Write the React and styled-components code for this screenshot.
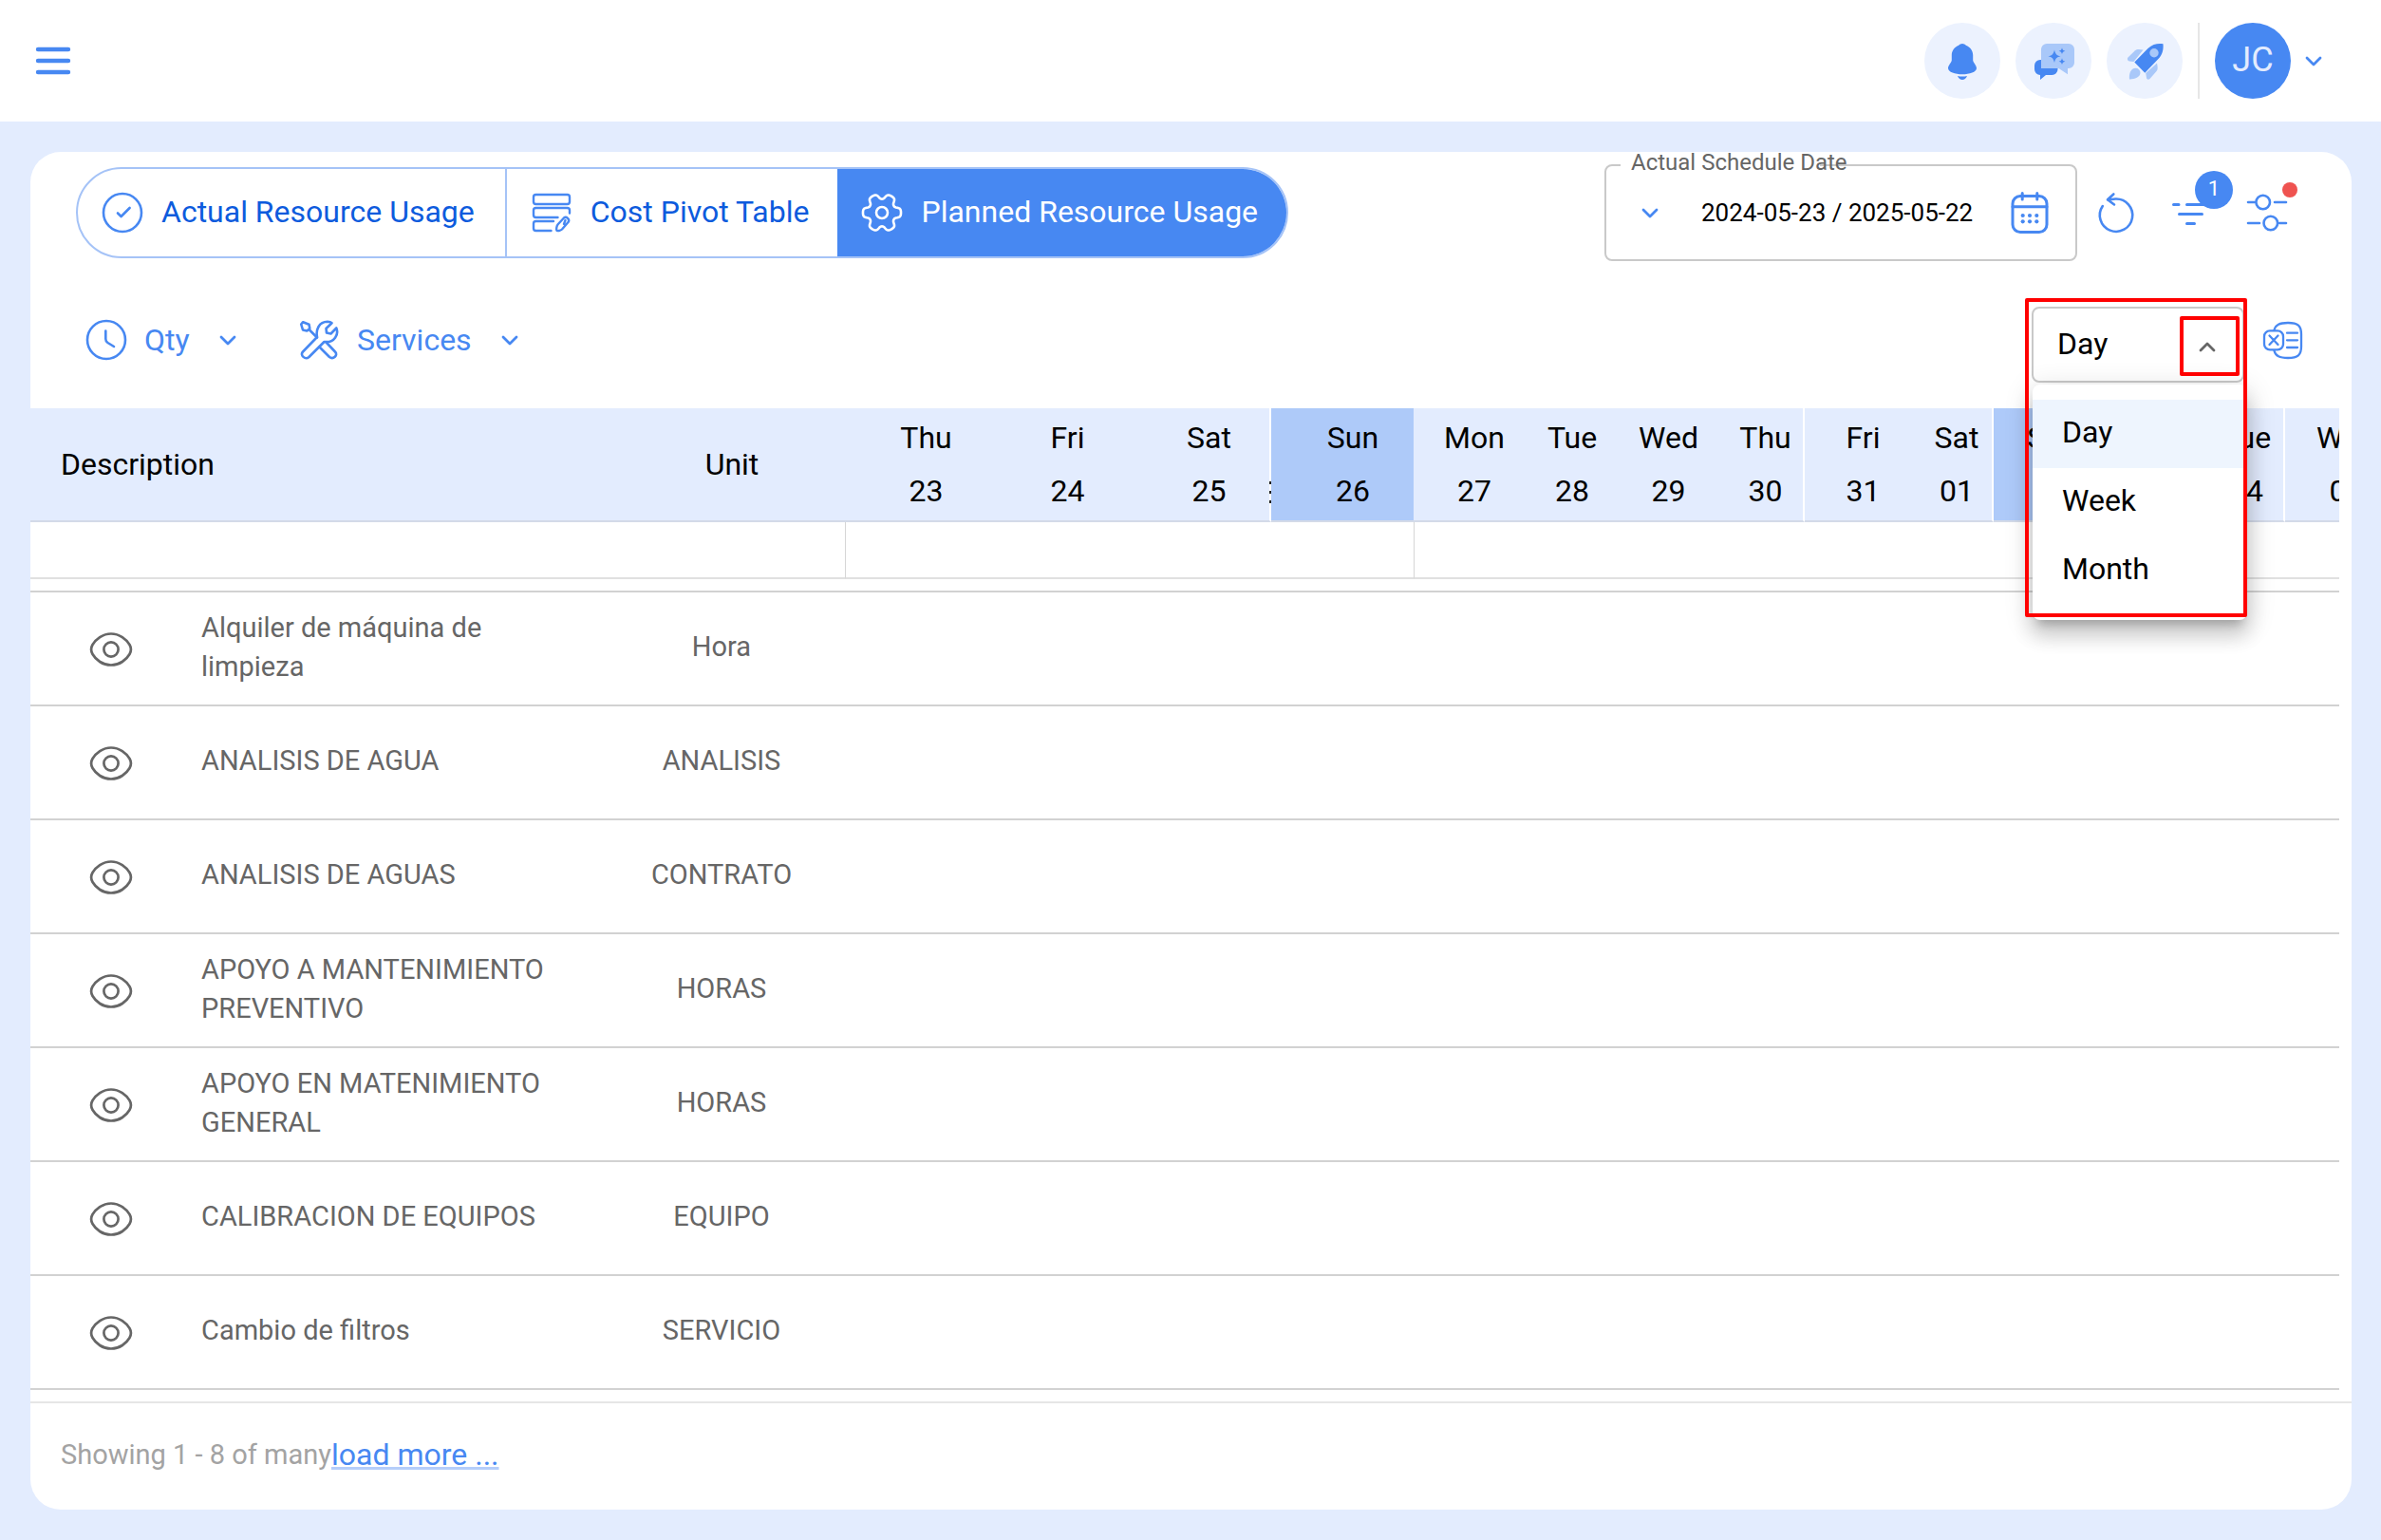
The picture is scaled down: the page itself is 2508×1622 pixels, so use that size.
import React from 'react';
import styled, { createGlobalStyle, css } from 'styled-components';

const BLUE = '#4788f2';
const LIGHT_BLUE = '#a9c8f9';

const days = [
  { name: 'Thu', date: '23', width: 149 },
  { name: 'Fri', date: '24', width: 149 },
  { name: 'Sat', date: '25', width: 151, edge: true, grip: true },
  { name: 'Sun', date: '26', width: 150, sunday: true },
  { name: 'Mon', date: '27', width: 106 },
  { name: 'Tue', date: '28', width: 100 },
  { name: 'Wed', date: '29', width: 103 },
  { name: 'Thu', date: '30', width: 103, edge: true },
  { name: 'Fri', date: '31', width: 101 },
  { name: 'Sat', date: '01', width: 98, edge: true },
  { name: 'Sun', date: '02', width: 103, sunday: true },
  { name: 'Mon', date: '03', width: 102 },
  { name: 'Tue', date: '04', width: 102, edge: true },
  { name: 'Wed', date: '05', width: 107 },
];

const rows = [
  { description: 'Alquiler de máquina de limpieza', unit: 'Hora' },
  { description: 'ANALISIS DE AGUA', unit: 'ANALISIS' },
  { description: 'ANALISIS DE AGUAS', unit: 'CONTRATO' },
  { description: 'APOYO A MANTENIMIENTO PREVENTIVO', unit: 'HORAS' },
  { description: 'APOYO EN MATENIMIENTO GENERAL', unit: 'HORAS' },
  { description: 'CALIBRACION DE EQUIPOS', unit: 'EQUIPO' },
  { description: 'Cambio de filtros', unit: 'SERVICIO' },
];

const periods = ['Day', 'Week', 'Month'];

// six rounded lobes, the first one pointing right
const gearPath = (() => {
  const points = [];
  for (let i = 0; i < 120; i++) {
    const a = (i / 120) * Math.PI * 2;
    const r = 17 + 3.1 * Math.tanh(1.7 * Math.cos(6 * a) + 0.5);
    points.push(`${(22 + r * Math.cos(a)).toFixed(2)} ${(22 + r * Math.sin(a)).toFixed(2)}`);
  }
  return `M${points.join('L')}Z`;
})();

const CheckIcon = () => (
  <LineIcon width="44" height="44" viewBox="0 0 44 44">
    <circle cx="22" cy="22" r="20" />
    <path d="M17 22.5l3.6 3.5 9-9" />
  </LineIcon>
);

const PivotIcon = () => (
  <LineIcon width="44" height="44" viewBox="0 0 44 44" $stroke={2.4}>
    <rect x="3" y="3" width="38" height="10" rx="2.5" />
    <path d="M41 22.5v-3a2.5 2.5 0 0 0-2.5-2.5h-33a2.5 2.5 0 0 0-2.5 2.5v5a2.5 2.5 0 0 0 2.5 2.5h23" />
    <path d="M24 31H5.5a2.5 2.5 0 0 0-2.5 2.5v5a2.5 2.5 0 0 0 2.5 2.5h16" />
    <path d="M28.5 34.5l6.5-7c2.5-2 6.5 1.5 4.7 4.3l-6.7 7.7c-1.5 1.5-5 2-5.5 1.3-.7-1-.3-4.7 1-6.3zM36.5 30l-1.5 4" />
  </LineIcon>
);

const GearIcon = () => (
  <LineIcon width="44" height="44" viewBox="0 0 44 44">
    <path d={gearPath} />
    <circle cx="22" cy="22" r="6" />
  </LineIcon>
);

const ClockIcon = () => (
  <LineIcon width="44" height="44" viewBox="0 0 44 44">
    <circle cx="22" cy="22" r="20" />
    <path d="M21.3 12.5v8.5c0 2 .7 3 2.2 4l6.5 4" />
  </LineIcon>
);

const ToolsIcon = () => (
  <LineIcon width="44" height="44" viewBox="0 0 44 44">
    <path d="M3.2 5.5L5.2 3.2l6.3 2.6.8 4.2-3 2.5-4.3-1zM12 11.5l8 8" />
    <path d="M20 19C18.5 11 22 3 31 2.8c2 0 3.5.4 4.5 1.4L29.5 10l.5 4.500 4.500 1 5.800-6C43 16 38.500 25.500 27.500 24l-16 16C7.500 43.500 1.500 38 5 34.500z" />
    <path d="M22.5 29.5L33 40c4 3 9.5-2 6-5.5l-9-9.5" />
  </LineIcon>
);

const CalendarIcon = () => (
  <LineIcon width="44" height="46" viewBox="0 0 44 46" $stroke={3}>
    <rect x="4" y="5.5" width="36" height="38" rx="8" />
    <path d="M4 16.7h36M14.2 2.5v6.5M29.8 2.5v6.5" />
    <g fill="currentColor" stroke="none">
      {[14.7, 22, 29.3].map((x) => (
        <React.Fragment key={x}>
          <circle cx={x} cy="26" r="2.1" />
          <circle cx={x} cy="32.3" r="2.1" />
        </React.Fragment>
      ))}
    </g>
  </LineIcon>
);

const RefreshIcon = () => (
  <LineIcon width="48" height="48" viewBox="0 -2 48 48">
    <path d="M10.8 15A17.2 17.2 0 1 0 24.3 7.5L16 8.5M22.3 2.5l-6.3 5.8 7 5.2" />
  </LineIcon>
);

const FilterIcon = () => (
  <LineIcon width="48" height="48" viewBox="0 0 48 48" $stroke={3}>
    <path d="M5.5 15.5h5.5M19.5 15.5h22M11.5 25.5h24M19.5 35.5h8" />
  </LineIcon>
);

const SlidersIcon = () => (
  <LineIcon width="48" height="48" viewBox="0 0 48 48">
    <path d="M4 13h7M32 13h12M4 35h12M37 35h7" />
    <circle cx="19.7" cy="13" r="7.3" />
    <circle cx="27.8" cy="35" r="7.3" />
  </LineIcon>
);

const ExcelIcon = () => (
  <LineIcon width="44" height="44" viewBox="0 0 44 44" $stroke={2.3}>
    <rect x="3" y="12.4" width="20" height="20" rx="6" />
    <path d="M8.5 17.5l9 9.5M17.5 17.5l-9 9.5M27 14.7h11M27 22.3h11M27 30h11" />
    <path d="M13.5 11.5C15 6 19 4 28 4c10.5 0 14 3 14 12v13c0 9-3.5 12-14 12-9 0-13-2-14.500-7.500" />
  </LineIcon>
);

const EyeIcon = () => (
  <LineIcon width="48" height="40" viewBox="0 0 48 40" $stroke={2.7}>
    <path d="M24 3.5C15 3.5 8 9.5 4.5 15c-1.7 3-1.7 7 0 10C8 31 15 36.5 24 36.5S40 31 43.5 25c1.7-3 1.7-7 0-10C40 9.5 33 3.5 24 3.5z" />
    <circle cx="24" cy="20" r="7.6" />
  </LineIcon>
);

const Chevron = ({ up }) => (
  <LineIcon width="32" height="32" viewBox="0 0 32 32" $stroke={2.8}>
    <path d={up ? 'M9 20l7-7 7 7' : 'M9 13l7 7 7-7'} />
  </LineIcon>
);

const MenuIcon = () => (
  <LineIcon width="40" height="40" viewBox="0 0 40 40" $stroke={4.4}>
    <path d="M4 8h32M4 20h32M4 32h32" />
  </LineIcon>
);

const BellIcon = () => (
  <svg width="48" height="48" viewBox="0 0 48 48" fill={BLUE}>
    <path d="M24 6c-1.5 0-2.8.7-3.8 1.8C15.8 9.5 12.8 13.5 12.8 18v5.5c0 2-3.8 5.5-3.8 8.3 0 4.2 7.5 6.5 15 6.5s15-2.3 15-6.5c0-2.8-3.8-6.3-3.8-8.3V18c0-4.5-3-8.5-7.4-10.2C26.8 6.7 25.5 6 24 6z" />
    <path d="M19 40c1 2.8 3 4 5 4s4-1.2 5-4c-3 .7-7 .7-10 0z" />
  </svg>
);

const ChatIcon = () => (
  <svg width="48" height="48" viewBox="0 0 48 48" fill={BLUE}>
    <path d="M4 29a6 6 0 0 1 6-6h18.5v10a6 6 0 0 1-6 6H16l-6 5v-5a6 6 0 0 1-6-6z" />
    <path
      fill={LIGHT_BLUE}
      d="M17 6h23a6 6 0 0 1 6 6v14a6 6 0 0 1-6 6h-1v6.3L29.5 32H11V12a6 6 0 0 1 6-6z"
    />
    <path d="M25 12.5c1 4.5 2.3 5.8 6.5 6.8-4.2 1-5.5 2.3-6.5 6.8-1-4.5-2.3-5.8-6.5-6.8 4.2-1 5.5-2.3 6.5-6.8z" />
    <path d="M33 10.3c.6 2.3 1.2 2.9 3.4 3.4-2.2.5-2.8 1.1-3.4 3.4-.6-2.3-1.2-2.9-3.4-3.4 2.2-.5 2.8-1.1 3.4-3.4z" />
    <path d="M33 21.3c.6 2.3 1.2 2.9 3.4 3.4-2.2.5-2.8 1.1-3.4 3.4-.6-2.3-1.2-2.9-3.4-3.4 2.2-.5 2.8-1.1 3.4-3.4z" />
  </svg>
);

const RocketIcon = () => (
  <svg width="48" height="48" viewBox="0 0 48 48" fill={LIGHT_BLUE}>
    <path d="M6.5 20.5l7.5-7.3c1.5-1.4 4-1.5 8.5-.7l-10 12.5-4.5-.5c-1.8-.4-2.8-2.5-1.5-4z" />
    <path d="M37 26.5c1 4.5 1 7-.5 8.5l-7 8c-1.5 1.3-3.2.8-3.5-1l-.8-5z" />
    <path d="M8 43.5c-.8-5.5 1.5-11.7 6.5-11.7a5 5 0 0 1 5 5c-.2 4.7-6.5 6.9-11.5 6.7z" />
    <path fill={BLUE} d="M13.3 25.5L27.5 11c5-5 11-5.5 16-4.800.5 5.800-.5 11.300-5.500 16.300L24.300 36.800z" />
    <circle cx="34" cy="15.7" r="4.7" />
  </svg>
);

const App = () => {
  return (
    <Page>
      <GlobalStyle />
      <Header>
        <IconButton aria-label="Menu">
          <MenuIcon />
        </IconButton>
        <HeaderActions>
          <RoundButton aria-label="Notifications"><BellIcon /></RoundButton>
          <RoundButton aria-label="Assistant"><ChatIcon /></RoundButton>
          <RoundButton aria-label="Launch"><RocketIcon /></RoundButton>
          <Divider />
          <UserButton>
            <Avatar>JC</Avatar>
            <Chevron />
          </UserButton>
        </HeaderActions>
      </Header>

      <Card>
        <TopBar>
          <Tabs>
            <Tab><CheckIcon /><span>Actual Resource Usage</span></Tab>
            <Tab><PivotIcon /><span>Cost Pivot Table</span></Tab>
            <Tab $active><GearIcon /><span>Planned Resource Usage</span></Tab>
          </Tabs>
          <TopActions>
            <DateField>
              <DateLabel htmlFor="schedule-date">Actual Schedule Date</DateLabel>
              <Chevron />
              <DateInput id="schedule-date" type="text" defaultValue="2024-05-23 / 2025-05-22" />
              <IconButton aria-label="Open calendar"><CalendarIcon /></IconButton>
            </DateField>
            <IconGroup>
              <IconButton aria-label="Refresh"><RefreshIcon /></IconButton>
              <IconButton aria-label="Filter">
                <FilterIcon />
                <Badge>1</Badge>
              </IconButton>
              <IconButton aria-label="Settings">
                <SlidersIcon />
                <Dot />
              </IconButton>
            </IconGroup>
          </TopActions>
        </TopBar>

        <FilterBar>
          <Filters>
            <FilterLabel>
              <ClockIcon />
              <PlainSelect aria-label="Measure"><option>Qty</option></PlainSelect>
              <Chevron />
            </FilterLabel>
            <FilterLabel>
              <ToolsIcon />
              <PlainSelect aria-label="Resource type"><option>Services</option></PlainSelect>
              <Chevron />
            </FilterLabel>
          </Filters>
          <PeriodActions>
            <PeriodPicker>
              <PeriodSelect aria-label="Period" defaultValue="Day">
                {periods.map((p) => <option key={p}>{p}</option>)}
              </PeriodSelect>
              <PeriodArrow><Chevron up /></PeriodArrow>
              <PeriodMenu role="listbox" aria-label="Period options">
                {periods.map((p) => (
                  <PeriodOption key={p} role="option" aria-selected={p === 'Day'}>{p}</PeriodOption>
                ))}
              </PeriodMenu>
              <PickerOutline />
            </PeriodPicker>
            <ExportButton aria-label="Export to Excel"><ExcelIcon /></ExportButton>
          </PeriodActions>
        </FilterBar>

        <TableWrapper>
          <Table>
            <colgroup>
              <Col $width={170} />
              <Col $width={428} />
              <Col $width={260} />
              {days.map((d, i) => <Col key={i} $width={d.width} />)}
            </colgroup>
            <thead>
              <tr>
                <HeadCell colSpan={2} $left>Description</HeadCell>
                <HeadCell>Unit</HeadCell>
                {days.map((d, i) => (
                  <HeadCell key={i} $sunday={d.sunday} $edge={d.edge}>
                    {d.name}
                    <br />
                    {d.date}
                    {d.grip && <Grip />}
                  </HeadCell>
                ))}
              </tr>
            </thead>
            <tbody>
              <tr>
                <BlankCell colSpan={3} />
                <BlankCell colSpan={4} $divided />
                <BlankCell colSpan={10} $divided />
              </tr>
              <tr>
                <SpacerCell colSpan={17} />
              </tr>
              {rows.map((row) => (
                <tr key={row.description}>
                  <Cell>
                    <EyeButton aria-label={`View ${row.description}`}><EyeIcon /></EyeButton>
                  </Cell>
                  <Cell $left>{row.description}</Cell>
                  <Cell>{row.unit}</Cell>
                  <Cell colSpan={14} />
                </tr>
              ))}
            </tbody>
          </Table>
        </TableWrapper>

        <Footer>
          <span>Showing 1 - 8 of many</span>
          <LoadMore href="#more">load more ...</LoadMore>
        </Footer>
      </Card>
    </Page>
  );
};

export default App;

const GlobalStyle = createGlobalStyle`
  * {
    box-sizing: border-box;
  }

  body {
    margin: 0;
    background-color: #e3ecfe;
    font-family: Roboto, 'Liberation Sans', sans-serif;
    font-size: 32px;
    color: #000;
  }

  button, input, select {
    font: inherit;
    color: inherit;
    border: none;
    background: none;
    padding: 0;
    margin: 0;
  }

  svg {
    display: block;
    flex: none;
  }
`;

const Page = styled.div`
  min-height: 100vh;
  display: flex;
  flex-direction: column;
`;

const LineIcon = styled.svg`
  fill: none;
  stroke: currentColor;
  stroke-width: ${({ $stroke }) => $stroke || 2.6};
  stroke-linecap: round;
  stroke-linejoin: round;
`;

const Header = styled.header`
  display: flex;
  align-items: center;
  justify-content: space-between;
  height: 128px;
  padding: 0 55px 0 36px;
  background-color: #fff;
`;

const HeaderActions = styled.div`
  display: flex;
  align-items: center;
  gap: 16px;
`;

const IconButton = styled.button`
  position: relative;
  color: ${BLUE};
  cursor: pointer;
`;

const RoundButton = styled.button`
  display: flex;
  align-items: center;
  justify-content: center;
  width: 80px;
  height: 80px;
  border-radius: 50%;
  background-color: #ecf2fe;
`;

const Divider = styled.div`
  width: 2px;
  height: 80px;
  background-color: #e6e6e6;
`;

const UserButton = styled.button`
  display: flex;
  align-items: center;
  gap: 8px;
  color: ${BLUE};
`;

const Avatar = styled.span`
  width: 80px;
  height: 80px;
  border-radius: 50%;
  background-color: ${BLUE};
  color: #e3ecfe;
  font-size: 36px;
  line-height: 78px;
  text-align: center;
`;

const Card = styled.main`
  flex: 1;
  margin: 32px 31px 32px 32px;
  border-radius: 32px;
  background-color: #fff;
`;

const TopBar = styled.div`
  display: flex;
  align-items: center;
  justify-content: space-between;
  padding: 13px 65px 0 48px;
`;

const Tabs = styled.div`
  display: flex;
  height: 96px;
  border: 2px solid #a5c3f7;
  border-radius: 48px;
  overflow: hidden;
`;

const Tab = styled.button`
  display: flex;
  align-items: center;
  gap: 19px;
  padding: 0 32px 0 25px;
  color: #0d5bdd;

  svg {
    color: ${BLUE};
  }

  span {
    padding-bottom: 2px;
  }

  & + & {
    border-left: 2px solid #a5c3f7;
  }

  ${({ $active }) => $active && css`
    margin: -2px;
    background-color: ${BLUE};
    color: #fff;

    svg {
      color: #fff;
    }

    && {
      border-left: none;
    }
  `}
`;

const TopActions = styled.div`
  display: flex;
  align-items: center;
  gap: 16px;
`;

const DateField = styled.div`
  position: relative;
  display: flex;
  align-items: center;
  height: 102px;
  padding: 0 26px 0 30px;
  border: 2px solid #c9c9c9;
  border-radius: 8px;
  color: ${BLUE};
`;

const DateLabel = styled.label`
  position: absolute;
  top: -18px;
  left: 15px;
  width: 210px;
  padding-left: 11px;
  background: linear-gradient(transparent 50%, #fff 50%);
  color: #666;
  font-size: 24px;
  line-height: 28px;
  white-space: nowrap;
`;

const DateInput = styled.input`
  width: 362px;
  padding-left: 38px;
  color: #000;
  font-size: 26px;
`;

const IconGroup = styled.div`
  display: flex;
  align-items: center;
  gap: 32px;
`;

const Badge = styled.span`
  position: absolute;
  top: -20px;
  left: 28px;
  width: 40px;
  height: 40px;
  border-radius: 50%;
  background-color: ${BLUE};
  color: #fff;
  font-size: 22px;
  line-height: 38px;
  text-align: center;
`;

const Dot = styled.span`
  position: absolute;
  top: -8px;
  left: 40px;
  width: 16px;
  height: 16px;
  border-radius: 50%;
  background-color: #ef5350;
`;

const FilterBar = styled.div`
  display: flex;
  align-items: flex-end;
  justify-content: space-between;
  padding: 38px 51px 27px 58px;
`;

const Filters = styled.div`
  display: flex;
  align-items: center;
  gap: 58px;
  height: 90px;
`;

const FilterLabel = styled.label`
  display: flex;
  align-items: center;
  gap: 18px;
  color: ${BLUE};
`;

const PlainSelect = styled.select`
  appearance: none;
  margin-right: 6px;
`;

const PeriodActions = styled.div`
  display: flex;
  align-items: center;
  gap: 18px;
`;

const PeriodPicker = styled.div`
  position: relative;
  width: 224px;
  height: 80px;
`;

const PeriodSelect = styled.select`
  appearance: none;
  width: 100%;
  height: 80px;
  padding: 0 64px 2px 25px;
  border: 2px solid #c9c9c9;
  border-radius: 8px;
`;

const PeriodArrow = styled.span`
  position: absolute;
  top: 10px;
  right: 5px;
  z-index: 2;
  display: flex;
  align-items: center;
  justify-content: center;
  width: 63px;
  height: 63px;
  padding-right: 6px;
  border: 4px solid #f00;
  border-radius: 2px;
  color: #666;
  pointer-events: none;
`;

const PeriodMenu = styled.ul`
  position: absolute;
  top: 82px;
  left: 1px;
  z-index: 1;
  width: 226px;
  margin: 0;
  padding: 16px 0;
  border-radius: 8px;
  background-color: #fff;
  box-shadow: 0 10px 10px -6px rgba(0, 0, 0, 0.2), 0 16px 20px 2px rgba(0, 0, 0, 0.14),
    0 6px 28px 4px rgba(0, 0, 0, 0.12);
  list-style: none;
`;

const PeriodOption = styled.li`
  padding: 0 31px 4px;
  line-height: 68px;
  background-color: ${(props) => (props['aria-selected'] ? '#eef5fe' : '#fff')};
`;

const PickerOutline = styled.div`
  position: absolute;
  top: -9px;
  left: -7px;
  z-index: 2;
  width: 234px;
  height: 336px;
  border: 4px solid #f00;
  border-radius: 2px;
  pointer-events: none;
`;

const ExportButton = styled(IconButton)`
  padding-bottom: 10px;
`;

const TableWrapper = styled.div`
  margin-right: 13px;
  overflow: hidden;
`;

const Table = styled.table`
  width: 100%;
  table-layout: fixed;
  border-collapse: separate;
  border-spacing: 0;
`;

const Col = styled.col`
  width: ${({ $width }) => $width}px;
`;

const HeadCell = styled.th`
  position: relative;
  height: 120px;
  padding: 0 0 1px ${({ $left }) => ($left ? 32 : 22)}px;
  border-bottom: 2px solid #d3dae8;
  background-color: ${({ $sunday }) => ($sunday ? '#aecaf9' : '#e3ecfe')};
  font-weight: 400;
  line-height: 56px;
  text-align: ${({ $left }) => ($left ? 'left' : 'center')};
  ${({ $edge }) => $edge && 'border-right: 2px solid #fff;'}
`;

// the part of the column handle that shows beside the next column
const Grip = styled.span`
  position: absolute;
  right: -2px;
  bottom: 18px;
  width: 2px;
  height: 23px;
  background: repeating-linear-gradient(#222 0 3px, transparent 3px 10px);
`;

const BlankCell = styled.td`
  height: 60px;
  padding: 0;
  border-bottom: 2px solid #e0e0e0;
  ${({ $divided }) => $divided && 'border-left: 1px solid #d6d6d6;'}
`;

const SpacerCell = styled.td`
  height: 14px;
  padding: 0;
  border-bottom: 2px solid #d2d2d2;
`;

const Cell = styled.td`
  height: 120px;
  padding: ${({ $left }) => ($left ? '0 40px 3px 10px' : '0 0 4px')};
  border-bottom: 2px solid #d2d2d2;
  color: #666;
  font-size: 29px;
  line-height: 41px;
  text-align: ${({ $left }) => ($left ? 'left' : 'center')};
`;

const EyeButton = styled.button`
  display: block;
  margin: 6px auto 0;
`;

const Footer = styled.footer`
  display: flex;
  align-items: center;
  height: 114px;
  margin-top: 12px;
  padding: 0 32px 4px;
  border-top: 2px solid #e6e6e6;
  color: #a3a3a3;
  font-size: 29px;
`;

const LoadMore = styled.a`
  color: ${BLUE};
  font-size: 32px;
  text-decoration: underline;
  text-decoration-color: #b5cefa;
  text-decoration-thickness: 3px;
`;
